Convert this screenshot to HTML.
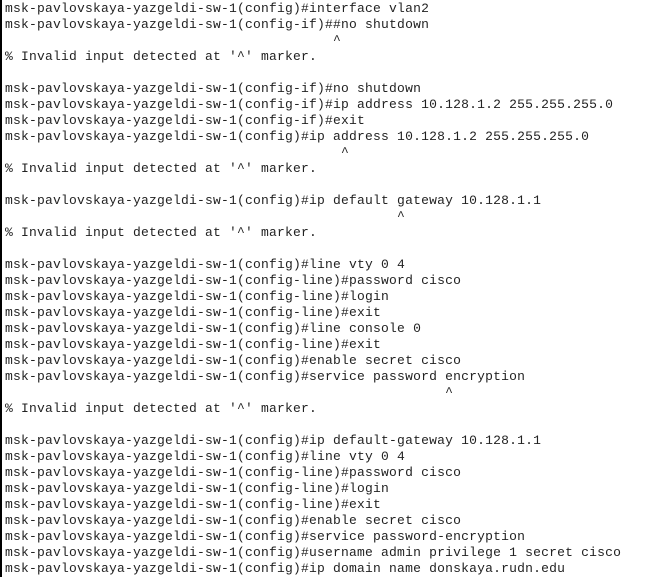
<!DOCTYPE html>
<html><head><meta charset="utf-8"><style>
html,body{margin:0;padding:0;background:#fff;width:672px;height:577px;overflow:hidden}
body{position:relative}
.bar{position:absolute;left:0;top:0;width:2px;height:577px;background:#000}
pre{margin:0;position:absolute;left:5px;top:1px;font-family:"Liberation Mono","Courier New",monospace;font-size:13px;letter-spacing:0.2px;line-height:16px;color:#222}
</style></head><body><div class="bar"></div><pre>msk-pavlovskaya-yazgeldi-sw-1(config)#interface vlan2
msk-pavlovskaya-yazgeldi-sw-1(config-if)##no shutdown
                                         ^
% Invalid input detected at '^' marker.

msk-pavlovskaya-yazgeldi-sw-1(config-if)#no shutdown
msk-pavlovskaya-yazgeldi-sw-1(config-if)#ip address 10.128.1.2 255.255.255.0
msk-pavlovskaya-yazgeldi-sw-1(config-if)#exit
msk-pavlovskaya-yazgeldi-sw-1(config)#ip address 10.128.1.2 255.255.255.0
                                          ^
% Invalid input detected at '^' marker.

msk-pavlovskaya-yazgeldi-sw-1(config)#ip default gateway 10.128.1.1
                                                 ^
% Invalid input detected at '^' marker.

msk-pavlovskaya-yazgeldi-sw-1(config)#line vty 0 4
msk-pavlovskaya-yazgeldi-sw-1(config-line)#password cisco
msk-pavlovskaya-yazgeldi-sw-1(config-line)#login
msk-pavlovskaya-yazgeldi-sw-1(config-line)#exit
msk-pavlovskaya-yazgeldi-sw-1(config)#line console 0
msk-pavlovskaya-yazgeldi-sw-1(config-line)#exit
msk-pavlovskaya-yazgeldi-sw-1(config)#enable secret cisco
msk-pavlovskaya-yazgeldi-sw-1(config)#service password encryption
                                                       ^
% Invalid input detected at '^' marker.

msk-pavlovskaya-yazgeldi-sw-1(config)#ip default-gateway 10.128.1.1
msk-pavlovskaya-yazgeldi-sw-1(config)#line vty 0 4
msk-pavlovskaya-yazgeldi-sw-1(config-line)#password cisco
msk-pavlovskaya-yazgeldi-sw-1(config-line)#login
msk-pavlovskaya-yazgeldi-sw-1(config-line)#exit
msk-pavlovskaya-yazgeldi-sw-1(config)#enable secret cisco
msk-pavlovskaya-yazgeldi-sw-1(config)#service password-encryption
msk-pavlovskaya-yazgeldi-sw-1(config)#username admin privilege 1 secret cisco
msk-pavlovskaya-yazgeldi-sw-1(config)#ip domain name donskaya.rudn.edu</pre></body></html>
